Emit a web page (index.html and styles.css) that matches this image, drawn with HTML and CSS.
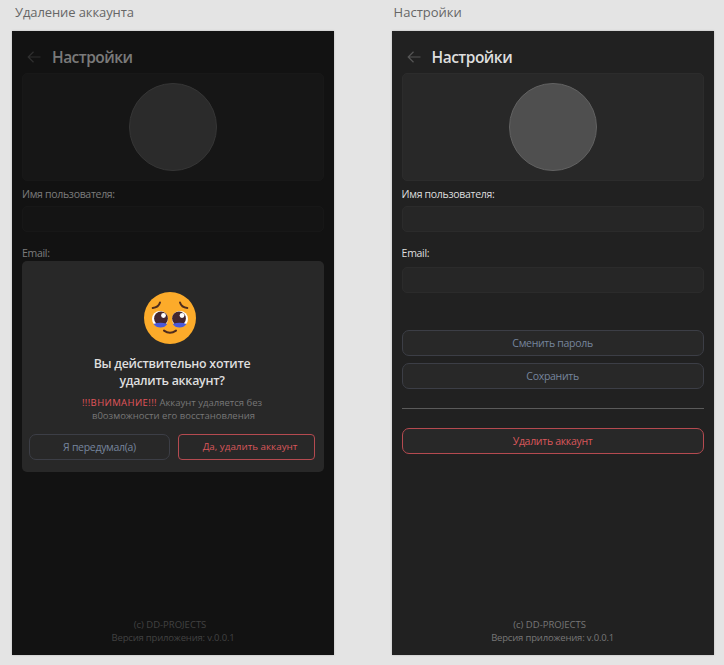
FILE: index.html
```html
<!DOCTYPE html>
<html lang="ru">
<head>
    <meta charset="UTF-8">
    <title>Настройки</title>
    <link rel="stylesheet" href="styles.css">
</head>
<body>
    <div class="board">
        <div class="artboard">
            <div class="artboard-name name-delete">Удаление аккаунта</div>
            <div class="screen">
                <div class="header">
                    <svg class="back" viewBox="0 0 14 12"><path d="M6.500 .8 1.200 6l5.300 5.200M1.200 6H13.500"/></svg>
                    <h1>Настройки</h1>
                </div>
                <div class="avatar-card"><div class="avatar"></div></div>
                <div class="label label-user">Имя пользователя:</div>
                <div class="input"></div>
                <div class="label label-email">Email:</div>
                <div class="footer">
                    <div class="copyright">(c) DD-PROJECTS</div>
                    <div class="version">Версия приложения: v.0.0.1</div>
                </div>

                <!-- delete confirmation -->
                <div class="overlay">
                    <div class="modal">
                        <svg class="emoji" viewBox="0 0 52 52">
                            <circle cx="26" cy="26" r="26" fill="#fcab2a"/>
                            <circle cx="16" cy="27" r="8" fill="#fff"/>
                            <circle cx="36" cy="27" r="8" fill="#fff"/>
                            <circle cx="17" cy="26.500" r="6.900" fill="#44262f"/>
                            <circle cx="35" cy="26.500" r="6.900" fill="#44262f"/>
                            <path d="M9.500 32Q16.500 29.500 23.200 32 21 35.500 16.500 35.500T9.500 32ZM28.800 32Q35.500 29.500 42.500 32 40 35.500 35.500 35.500T28.800 32Z" fill="#4a59d8"/>
                            <circle cx="19.500" cy="23.500" r="2.400" fill="#fff"/>
                            <circle cx="38" cy="23.500" r="2.400" fill="#fff"/>
                            <path d="M8.700 16Q14.500 15.500 16 10.500M36 10.500Q37.500 15.500 43.300 16M20 38.600Q26 42.800 32 38.600" fill="none" stroke="#4e2c1d" stroke-width="2" stroke-linecap="round"/>
                        </svg>
                        <h2>
                            <div>Вы действительно хотите</div>
                            <div>удалить аккаунт?</div>
                        </h2>
                        <div class="warning">
                            <div class="warning-first"><b>!!!ВНИМАНИЕ!!!</b> Аккаунт удаляется без</div>
                            <div class="warning-second">в0озможности его восстановления</div>
                        </div>
                        <div class="modal-buttons">
                            <button class="btn btn-cancel">Я передумал(а)</button>
                            <button class="btn btn-danger btn-confirm">Да, удалить аккаунт</button>
                        </div>
                    </div>
                </div>
            </div>
        </div>

        <div class="artboard">
            <div class="artboard-name">Настройки</div>
            <div class="screen">
                <div class="header">
                    <svg class="back" viewBox="0 0 14 12"><path d="M6.500 .8 1.200 6l5.300 5.200M1.200 6H13.500"/></svg>
                    <h1>Настройки</h1>
                </div>
                <div class="avatar-card"><div class="avatar"></div></div>
                <div class="label label-user">Имя пользователя:</div>
                <div class="input"></div>
                <div class="label label-email">Email:</div>
                <div class="input"></div>
                <div class="actions">
                    <button class="btn">Сменить пароль</button>
                    <button class="btn">Сохранить</button>
                </div>
                <div class="line"></div>
                <button class="btn btn-danger">Удалить аккаунт</button>
                <div class="footer">
                    <div class="copyright">(c) DD-PROJECTS</div>
                    <div class="version">Версия приложения: v.0.0.1</div>
                </div>
            </div>
        </div>
    </div>
</body>
</html>
```
FILE: styles.css
```css
* {
    box-sizing: border-box;
}

body {
    margin: 0;
    background-color: #e4e4e4;
    font-family: "Open Sans", "Noto Sans", sans-serif;
    white-space: nowrap;
}

.board {
    display: flex;
    gap: 57.6px;
    padding-left: 12px;
    height: 665px;
    overflow: hidden;
}

.artboard {
    width: 322px;
    flex: none;
}

.artboard-name {
    height: 31px;
    padding: 2px 0 0 2px;
    font-size: 13px;
    line-height: 20px;
    color: #666;
}

.name-delete {
    padding-left: 3px;
    letter-spacing: -0.1px;
}

.screen {
    position: relative;
    display: flex;
    flex-direction: column;
    height: 624px;
    padding: 14px 10px 11px;
    background-color: #212121;
    box-shadow: 0 0 2px rgba(0, 0, 0, 0.2);
}

.header {
    display: flex;
    align-items: center;
    gap: 11px;
    height: 24px;
    padding-left: 5px;
    margin-bottom: 4px;
}

.back {
    width: 14px;
    height: 12px;
    fill: none;
    stroke: #555;
    stroke-width: 1.2;
}

h1 {
    margin: 0;
    font-size: 15.5px;
    font-weight: 600;
    line-height: 24px;
    letter-spacing: -0.52px;
    color: #dedede;
}

.avatar-card {
    display: flex;
    justify-content: center;
    align-items: center;
    height: 108px;
    border: 1px solid #2c2c2c;
    border-radius: 5px;
    background-color: #282828;
}

.avatar {
    width: 88px;
    height: 88px;
    border: 1px solid #626262;
    border-radius: 50%;
    background-color: #4f4f4f;
}

.label {
    font-size: 10.5px;
    line-height: 16px;
    letter-spacing: -0.3px;
    color: #dedede;
}

.label-user {
    margin: 5px 0 4px;
}

.label-email {
    margin: 13px 0 6px;
}

.input {
    height: 26px;
    border: 1px solid #2b2b2b;
    border-radius: 5px;
    background-color: #262626;
}

.actions {
    display: flex;
    flex-direction: column;
    gap: 7px;
    margin-top: 37px;
}

.btn {
    height: 26px;
    padding: 0;
    border: 1px solid #3c3e46;
    border-radius: 7px;
    background-color: #282828;
    color: #76859d;
    font-family: inherit;
    font-size: 10.5px;
    line-height: 24px;
    letter-spacing: -0.3px;
}

.line {
    height: 1px;
    margin: 19px 0;
    background-color: #5a5a5a;
}

.btn-danger {
    border-color: #b54a50;
    color: #d9575b;
}

.footer {
    margin-top: auto;
    text-align: center;
    font-size: 9.5px;
    line-height: 13px;
    color: #777;
}

.copyright {
    padding-right: 6px;
}

.version {
    letter-spacing: -0.18px;
}

.overlay {
    position: absolute;
    inset: 0;
    padding: 230px 10px 0;
    background-color: rgba(0, 0, 0, 0.45);
}

.modal {
    display: flex;
    flex-direction: column;
    align-items: center;
    height: 211px;
    padding: 31px 9px 0 7px;
    border-radius: 5px;
    background-color: #282828;
}

.emoji {
    width: 52px;
    height: 52px;
    margin-right: 5px;
}

h2 {
    margin: 11px 0 7px;
    font-size: 12.4px;
    font-weight: 600;
    line-height: 17px;
    letter-spacing: -0.27px;
    text-align: center;
    color: #dedede;
}

.warning {
    font-size: 9.5px;
    line-height: 13px;
    text-align: center;
    color: #777;
}

.warning b {
    font-weight: 400;
    letter-spacing: 0.4px;
    color: #e0555b;
}

.warning-second {
    padding-left: 3px;
}

.modal-buttons {
    display: grid;
    grid-template-columns: 141px 137px;
    justify-content: space-between;
    width: 100%;
    margin-top: 12px;
}

.btn-cancel {
    line-height: 23px;
}

.btn-confirm {
    border-radius: 4px;
    padding-left: 7px;
    font-size: 9.8px;
    letter-spacing: 0;
}
```
